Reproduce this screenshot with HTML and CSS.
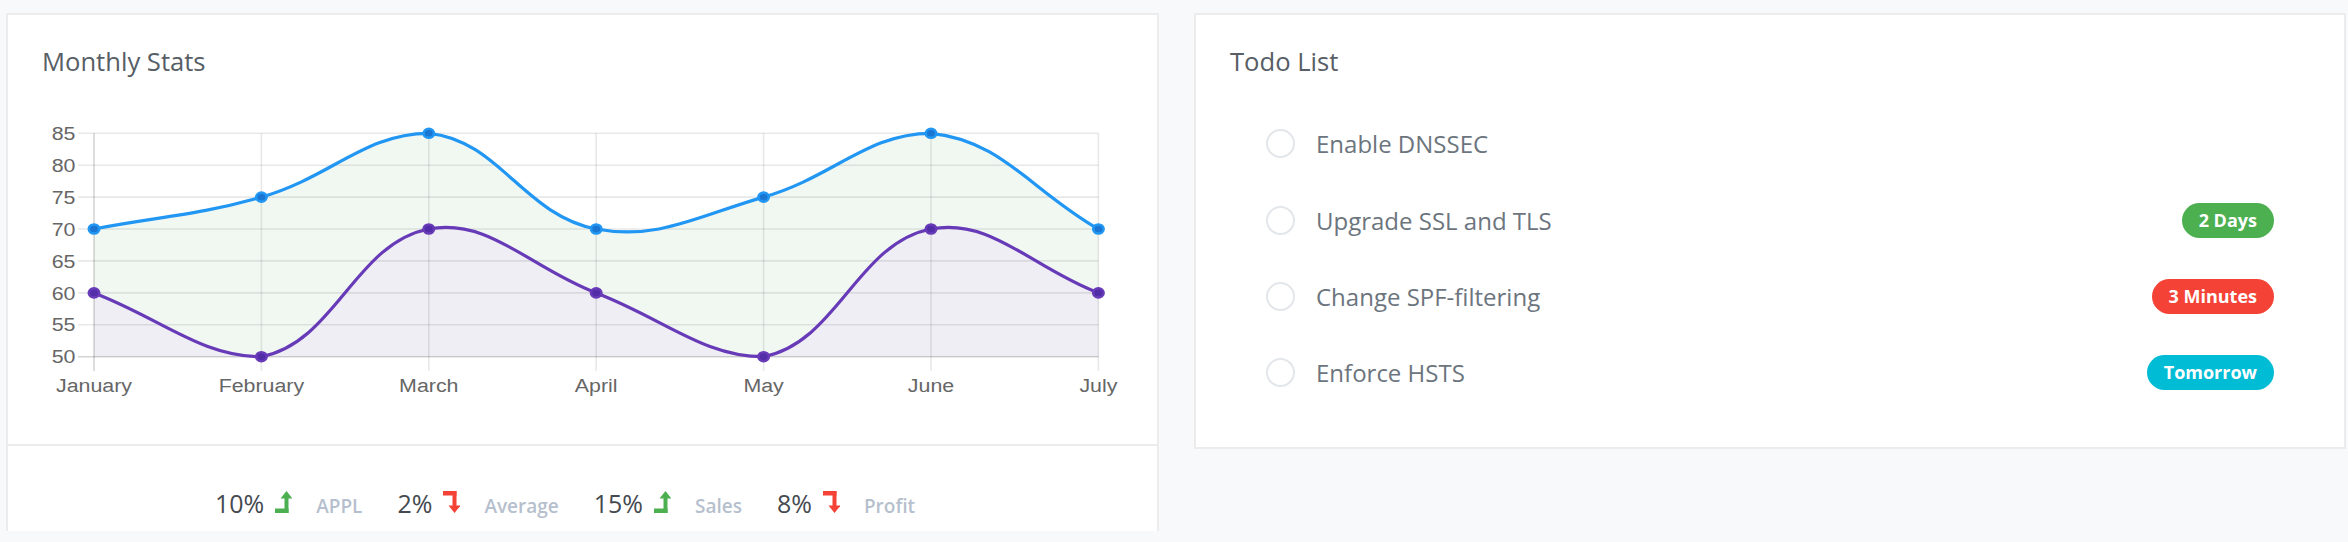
FILE: index.html
```html
<!DOCTYPE html>
<html lang="en">
<head>
<meta charset="utf-8">
<title>Dashboard</title>
<link rel="stylesheet" href="styles.css">
</head>
<body>
<div class="row">
  <section class="card card-stats">
    <div class="card-body">
      <h4 class="card-title">Monthly Stats</h4>
      <svg class="chart" viewBox="8 80 1149 364" xmlns="http://www.w3.org/2000/svg">
        <!-- fills -->
        <path class="fill-blue" d="M94,229 C160.96,216.24 196.72,215.59 261.4,197.1 C330.64,177.31 365.02,133.3 428.8,133.3 C498.94,139.98 523.82,215.21 596.2,229 C657.74,240.73 698.92,215.59 763.6,197.1 C832.84,177.31 867.22,133.3 931,133.3 C1001.14,139.98 1031.44,190.72 1098.4,229 L1098.4,356.7 L94,356.7 Z"/>
        <path class="fill-purple" d="M94,292.9 C160.96,318.42 201.27,356.7 261.4,356.7 C335.19,342.62 355.01,243.06 428.8,229 C488.93,217.54 529.24,267.36 596.2,292.9 C663.16,318.44 703.47,356.7 763.6,356.7 C837.39,342.62 857.21,243.06 931,229 C991.13,217.54 1031.44,267.34 1098.4,292.9 L1098.4,356.7 L94,356.7 Z"/>
        <!-- grid -->
        <g class="grid">
          <line x1="78" y1="133.3" x2="1098.4" y2="133.3"/>
          <line x1="78" y1="165.2" x2="1098.4" y2="165.2"/>
          <line x1="78" y1="197.1" x2="1098.4" y2="197.1"/>
          <line x1="78" y1="229" x2="1098.4" y2="229"/>
          <line x1="78" y1="260.9" x2="1098.4" y2="260.9"/>
          <line x1="78" y1="292.9" x2="1098.4" y2="292.9"/>
          <line x1="78" y1="324.8" x2="1098.4" y2="324.8"/>
          <line x1="261.4" y1="133.3" x2="261.4" y2="371"/>
          <line x1="428.8" y1="133.3" x2="428.8" y2="371"/>
          <line x1="596.2" y1="133.3" x2="596.2" y2="371"/>
          <line x1="763.6" y1="133.3" x2="763.6" y2="371"/>
          <line x1="931" y1="133.3" x2="931" y2="371"/>
          <line x1="1098.4" y1="133.3" x2="1098.4" y2="371"/>
        </g>
        <g class="axis">
          <line x1="78" y1="356.7" x2="1098.4" y2="356.7"/>
          <line x1="94" y1="133.3" x2="94" y2="371"/>
        </g>
        <!-- y labels -->
        <g class="tick-label" text-anchor="end">
          <text transform="translate(75.5,139.9) scale(1.15,1)">85</text>
          <text transform="translate(75.5,171.8) scale(1.15,1)">80</text>
          <text transform="translate(75.5,203.7) scale(1.15,1)">75</text>
          <text transform="translate(75.5,235.6) scale(1.15,1)">70</text>
          <text transform="translate(75.5,267.5) scale(1.15,1)">65</text>
          <text transform="translate(75.5,299.5) scale(1.15,1)">60</text>
          <text transform="translate(75.5,331.4) scale(1.15,1)">55</text>
          <text transform="translate(75.5,363.3) scale(1.15,1)">50</text>
        </g>
        <!-- x labels -->
        <g class="tick-label" text-anchor="middle">
          <text transform="translate(94,391.5) scale(1.15,1)">January</text>
          <text transform="translate(261.4,391.5) scale(1.15,1)">February</text>
          <text transform="translate(428.8,391.5) scale(1.15,1)">March</text>
          <text transform="translate(596.2,391.5) scale(1.15,1)">April</text>
          <text transform="translate(763.6,391.5) scale(1.15,1)">May</text>
          <text transform="translate(931,391.5) scale(1.15,1)">June</text>
          <text transform="translate(1098.4,391.5) scale(1.15,1)">July</text>
        </g>
        <!-- lines -->
        <path class="line-blue" d="M94,229 C160.96,216.24 196.72,215.59 261.4,197.1 C330.64,177.31 365.02,133.3 428.8,133.3 C498.94,139.98 523.82,215.21 596.2,229 C657.74,240.73 698.92,215.59 763.6,197.1 C832.84,177.31 867.22,133.3 931,133.3 C1001.14,139.98 1031.44,190.72 1098.4,229"/>
        <path class="line-purple" d="M94,292.9 C160.96,318.42 201.27,356.7 261.4,356.7 C335.19,342.62 355.01,243.06 428.8,229 C488.93,217.54 529.24,267.36 596.2,292.9 C663.16,318.44 703.47,356.7 763.6,356.7 C837.39,342.62 857.21,243.06 931,229 C991.13,217.54 1031.44,267.34 1098.4,292.9"/>
        <!-- points -->
        <g class="pt-blue">
          <ellipse cx="94" cy="229" rx="5.2" ry="4.5"/>
          <ellipse cx="261.4" cy="197.1" rx="5.2" ry="4.5"/>
          <ellipse cx="428.8" cy="133.3" rx="5.2" ry="4.5"/>
          <ellipse cx="596.2" cy="229" rx="5.2" ry="4.5"/>
          <ellipse cx="763.6" cy="197.1" rx="5.2" ry="4.5"/>
          <ellipse cx="931" cy="133.3" rx="5.2" ry="4.5"/>
          <ellipse cx="1098.4" cy="229" rx="5.2" ry="4.5"/>
        </g>
        <g class="pt-purple">
          <ellipse cx="94" cy="292.9" rx="5.2" ry="4.5"/>
          <ellipse cx="261.4" cy="356.7" rx="5.2" ry="4.5"/>
          <ellipse cx="428.8" cy="229" rx="5.2" ry="4.5"/>
          <ellipse cx="596.2" cy="292.9" rx="5.2" ry="4.5"/>
          <ellipse cx="763.6" cy="356.7" rx="5.2" ry="4.5"/>
          <ellipse cx="931" cy="229" rx="5.2" ry="4.5"/>
          <ellipse cx="1098.4" cy="292.9" rx="5.2" ry="4.5"/>
        </g>
      </svg>
    </div>
    <div class="card-footer">
      <div class="stat">
        <span class="stat-num">10%</span>
        <svg class="arrow arrow-up" viewBox="0 0 17 22"><polygon points="5.5,7.5 11.5,0 17.5,7.5"/><rect x="9.5" y="7" width="4" height="15"/><rect x="0" y="17.5" width="13.5" height="4.5"/></svg>
        <span class="stat-label">APPL</span>
      </div>
      <div class="stat">
        <span class="stat-num">2%</span>
        <svg class="arrow arrow-down" viewBox="0 0 17 22"><polygon points="5.5,14.5 17.5,14.5 11.5,22"/><rect x="9.5" y="0" width="4" height="15"/><rect x="0" y="0" width="13.5" height="4.5"/></svg>
        <span class="stat-label">Average</span>
      </div>
      <div class="stat">
        <span class="stat-num">15%</span>
        <svg class="arrow arrow-up" viewBox="0 0 17 22"><polygon points="5.5,7.5 11.5,0 17.5,7.5"/><rect x="9.5" y="7" width="4" height="15"/><rect x="0" y="17.5" width="13.5" height="4.5"/></svg>
        <span class="stat-label">Sales</span>
      </div>
      <div class="stat">
        <span class="stat-num">8%</span>
        <svg class="arrow arrow-down" viewBox="0 0 17 22"><polygon points="5.5,14.5 17.5,14.5 11.5,22"/><rect x="9.5" y="0" width="4" height="15"/><rect x="0" y="0" width="13.5" height="4.5"/></svg>
        <span class="stat-label">Profit</span>
      </div>
    </div>
  </section>

  <section class="card card-todo">
    <div class="card-body">
      <h4 class="card-title">Todo List</h4>
      <ul class="todo">
        <li class="todo-item"><span class="check"></span><span class="todo-text">Enable DNSSEC</span></li>
        <li class="todo-item"><span class="check"></span><span class="todo-text">Upgrade SSL and TLS</span><span class="badge badge-green">2 Days</span></li>
        <li class="todo-item"><span class="check"></span><span class="todo-text">Change SPF-filtering</span><span class="badge badge-red">3 Minutes</span></li>
        <li class="todo-item"><span class="check"></span><span class="todo-text">Enforce HSTS</span><span class="badge badge-cyan">Tomorrow</span></li>
      </ul>
    </div>
  </section>
</div>
</body>
</html>
```

FILE: styles.css
```css
html, body {
  margin: 0;
  padding: 0;
}

body {
  background: #f8f9fa;
  font-family: "Open Sans", "Noto Sans", sans-serif;
  width: 2348px;
  height: 542px;
  overflow: hidden;
}

.row {
  display: flex;
  align-items: flex-start;
  gap: 35px;
  padding: 13px 2px 0 6px;
}

.card {
  background: #fff;
  border: 2px solid #ececec;
  box-sizing: border-box;
}

.card-stats {
  flex: 0 0 1153px;
  border-bottom-width: 0;
}

.card-todo {
  flex: 1 1 auto;
}

.card-body {
  padding: 29px 0 0 0;
}

.card-title {
  margin: 0 0 0 34px;
  font-size: 25.6px;
  line-height: 36px;
  font-weight: 400;
  color: #575e65;
}

.chart {
  display: block;
  width: 1149px;
  height: 364px;
}

.fill-blue {
  fill: #f1f8f2;
}

.fill-purple {
  fill: #efeef4;
}

.grid line {
  stroke: rgba(0, 0, 0, 0.09);
  stroke-width: 1.6;
}

.axis line {
  stroke: rgba(0, 0, 0, 0.17);
  stroke-width: 1.6;
}

.tick-label text {
  font-family: "Liberation Sans", Arial, sans-serif;
  font-size: 18.6px;
  fill: #666;
}

.line-blue {
  fill: none;
  stroke: #2196f3;
  stroke-width: 3.2;
}

.line-purple {
  fill: none;
  stroke: #673ab7;
  stroke-width: 3.2;
}

.pt-blue ellipse {
  fill: #1976d2;
  stroke: #2196f3;
  stroke-width: 2.6;
}

.pt-purple ellipse {
  fill: #512da8;
  stroke: #673ab7;
  stroke-width: 2.6;
}

.card-footer {
  border-top: 2px solid #ececec;
  display: flex;
  justify-content: center;
  padding: 39px 0 7px 0;
  line-height: 36px;
}

.stat {
  display: flex;
  align-items: baseline;
  margin-right: 35px;
}

.stat-num {
  font-size: 25px;
  color: #454a50;
  margin-right: 11px;
}

.arrow {
  width: 17px;
  height: 22px;
  margin-right: 24px;
  flex: none;
}

.arrow-up {
  fill: #4caf50;
}

.arrow-down {
  fill: #f44336;
}

.stat-label {
  font-size: 19px;
  font-weight: 600;
  color: #b6bfcd;
}

.todo {
  list-style: none;
  margin: 25.6px 0 0 0;
  padding: 0 70px 35.8px 70px;
}

.todo-item {
  display: flex;
  align-items: center;
  height: 76.4px;
}

.check {
  width: 29px;
  height: 29px;
  box-sizing: border-box;
  border: 2px solid #e3e6ea;
  border-radius: 50%;
  margin-right: 21px;
  flex: none;
}

.todo-text {
  font-size: 24px;
  color: #6c757d;
}

.badge {
  margin-left: auto;
  height: 35px;
  line-height: 35px;
  padding: 0 17px;
  border-radius: 18px;
  color: #fff;
  font-size: 18px;
  font-weight: 700;
}

.badge-green {
  background: #4caf50;
}

.badge-red {
  background: #f44336;
}

.badge-cyan {
  background: #00bcd4;
}
```
